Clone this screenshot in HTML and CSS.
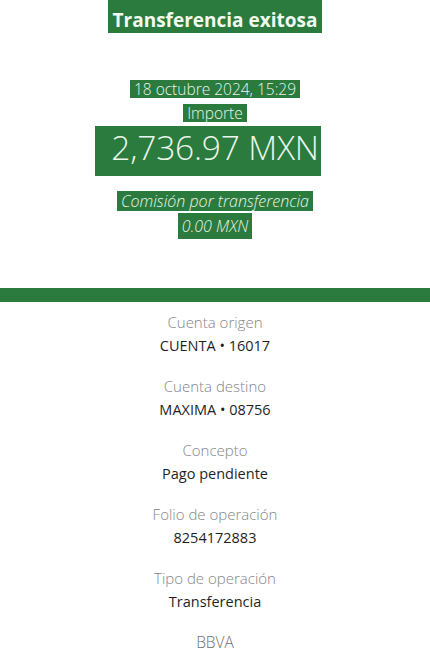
FILE: index.html
```html
<!DOCTYPE html>
<html lang="es">
<head>
<meta charset="utf-8">
<title>Transferencia exitosa</title>
<link rel="stylesheet" href="styles.css">
</head>
<body>
<header class="hero">
  <h1 class="hl title">Transferencia exitosa</h1>
  <p class="hl date">18 octubre 2024, 15:29</p>
  <p class="hl importe">Importe</p>
  <p class="hl amount">2,736.97 MXN</p>
  <p class="hl comision">Comisión por transferencia</p>
  <p class="hl fee">0.00 MXN</p>
</header>
<div class="bar"></div>
<main class="details">
  <div class="item"><span class="label">Cuenta origen</span><span class="value">CUENTA • 16017</span></div>
  <div class="item"><span class="label">Cuenta destino</span><span class="value">MAXIMA • 08756</span></div>
  <div class="item"><span class="label">Concepto</span><span class="value">Pago pendiente</span></div>
  <div class="item"><span class="label">Folio de operación</span><span class="value">8254172883</span></div>
  <div class="item"><span class="label">Tipo de operación</span><span class="value">Transferencia</span></div>
  <div class="item"><span class="label brand">BBVA</span></div>
</main>
</body>
</html>
```
FILE: styles.css
```css
html, body {
  margin: 0;
  padding: 0;
  background: #ffffff;
}
body {
  font-family: "Open Sans", "Liberation Sans", sans-serif;
  width: 430px;
  overflow: hidden;
}
.hero {
  display: flex;
  flex-direction: column;
  align-items: center;
}
.hl {
  margin: 0;
  background: #2b7a3e;
  color: #e9f6ea;
  padding: 0 4px;
}
.title {
  font-size: 19px;
  font-weight: 700;
  line-height: 26px;
  padding: 7px 5px 0;
  color: #f0faf0;
}
.date {
  margin-top: 47px;
  font-size: 15.5px;
  font-weight: 300;
  line-height: 18px;
}
.importe {
  margin-top: 6px;
  font-size: 15.5px;
  font-weight: 300;
  line-height: 18px;
}
.amount {
  margin-top: 4px;
  font-size: 33.5px;
  font-weight: 300;
  line-height: 42px;
  padding: 0 2px 8px 16px;
  margin-left: -14px;
  letter-spacing: -0.2px;
}
.comision {
  margin-top: 15px;
  font-size: 16px;
  font-style: italic;
  font-weight: 300;
  line-height: 20px;
}
.fee {
  margin-top: 2px;
  font-size: 16px;
  font-style: italic;
  font-weight: 300;
  line-height: 26px;
}
.bar {
  margin-top: 49px;
  height: 14px;
  background: #2b7a3e;
}
.details {
  display: flex;
  flex-direction: column;
  align-items: center;
  gap: 16px;
  padding-top: 8px;
}
.item {
  display: flex;
  flex-direction: column;
  align-items: center;
}
.label {
  font-size: 15px;
  font-weight: 300;
  line-height: 24px;
  color: #858585;
}
.value {
  font-size: 14.5px;
  font-weight: 400;
  line-height: 24px;
  color: #1f1f1f;
}
.brand {
  font-size: 15.5px;
  color: #6f6f6f;
}
```
